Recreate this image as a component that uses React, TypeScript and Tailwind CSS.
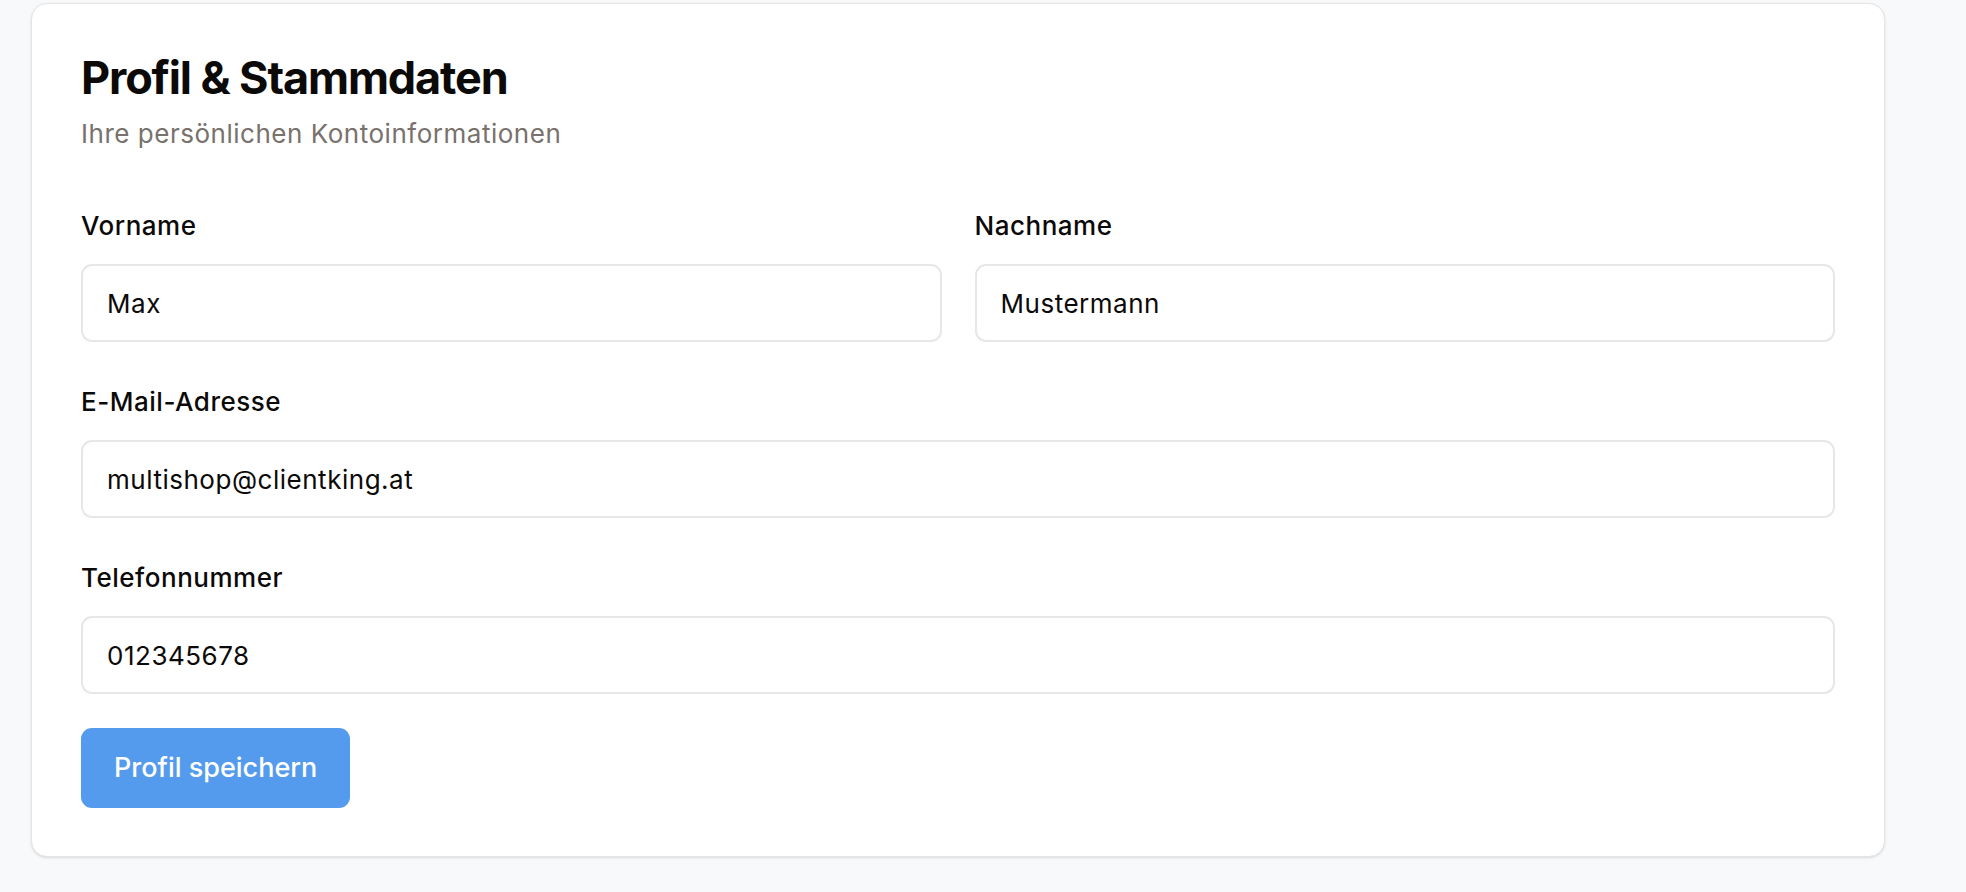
import { useState } from "react";

type FieldProps = {
  label: string;
  value: string;
  onChange: (v: string) => void;
  type?: string;
};

function Field({ label, value, onChange, type = "text" }: FieldProps) {
  return (
    <div className="flex flex-col">
      <label className="mb-[20px] block text-[26px] font-medium leading-[36px] tracking-[0.02em] text-[#0c0a09]">
        {label}
      </label>
      <input
        type={type}
        value={value}
        onChange={(e) => onChange(e.target.value)}
        className="h-[78px] w-full rounded-[11px] border-2 border-[#e7e7e7] bg-white px-[24px] text-[26px] tracking-[0.02em] text-[#0c0a09] outline-none"
      />
    </div>
  );
}

export default function App() {
  const [firstName, setFirstName] = useState("Max");
  const [lastName, setLastName] = useState("Mustermann");
  const [email, setEmail] = useState("multishop@clientking.at");
  const [phone, setPhone] = useState("012345678");

  return (
    <div
      className="min-h-screen bg-[#f8f9fb] pt-[3px] pl-[31px]"
      style={{ fontFamily: "Inter, 'Noto Sans', sans-serif" }}
    >
      <div className="w-[1854px] rounded-[16px] border border-[#e5e5e5] bg-white px-[49px] pt-[47px] pb-[48px] shadow-sm">
        <h1 className="text-[45px] font-bold leading-[53px] tracking-tight text-[#0c0a09]">
          Profil &amp; Stammdaten
        </h1>
        <p className="mt-[11px] text-[26px] leading-[37px] tracking-[0.02em] text-[#78716c]">
          Ihre persönlichen Kontoinformationen
        </p>

        <div className="mt-[56px] flex flex-col gap-[42px]">
          <div className="grid grid-cols-2 gap-x-[33px]">
            <Field label="Vorname" value={firstName} onChange={setFirstName} />
            <Field label="Nachname" value={lastName} onChange={setLastName} />
          </div>
          <Field
            label="E-Mail-Adresse"
            type="email"
            value={email}
            onChange={setEmail}
          />
          <Field
            label="Telefonnummer"
            type="tel"
            value={phone}
            onChange={setPhone}
          />
        </div>

        <button
          type="button"
          className="mt-[34px] h-[80px] rounded-[11px] bg-[#549bee] px-[33px] text-[27px] font-medium text-white"
        >
          Profil speichern
        </button>
      </div>
    </div>
  );
}
